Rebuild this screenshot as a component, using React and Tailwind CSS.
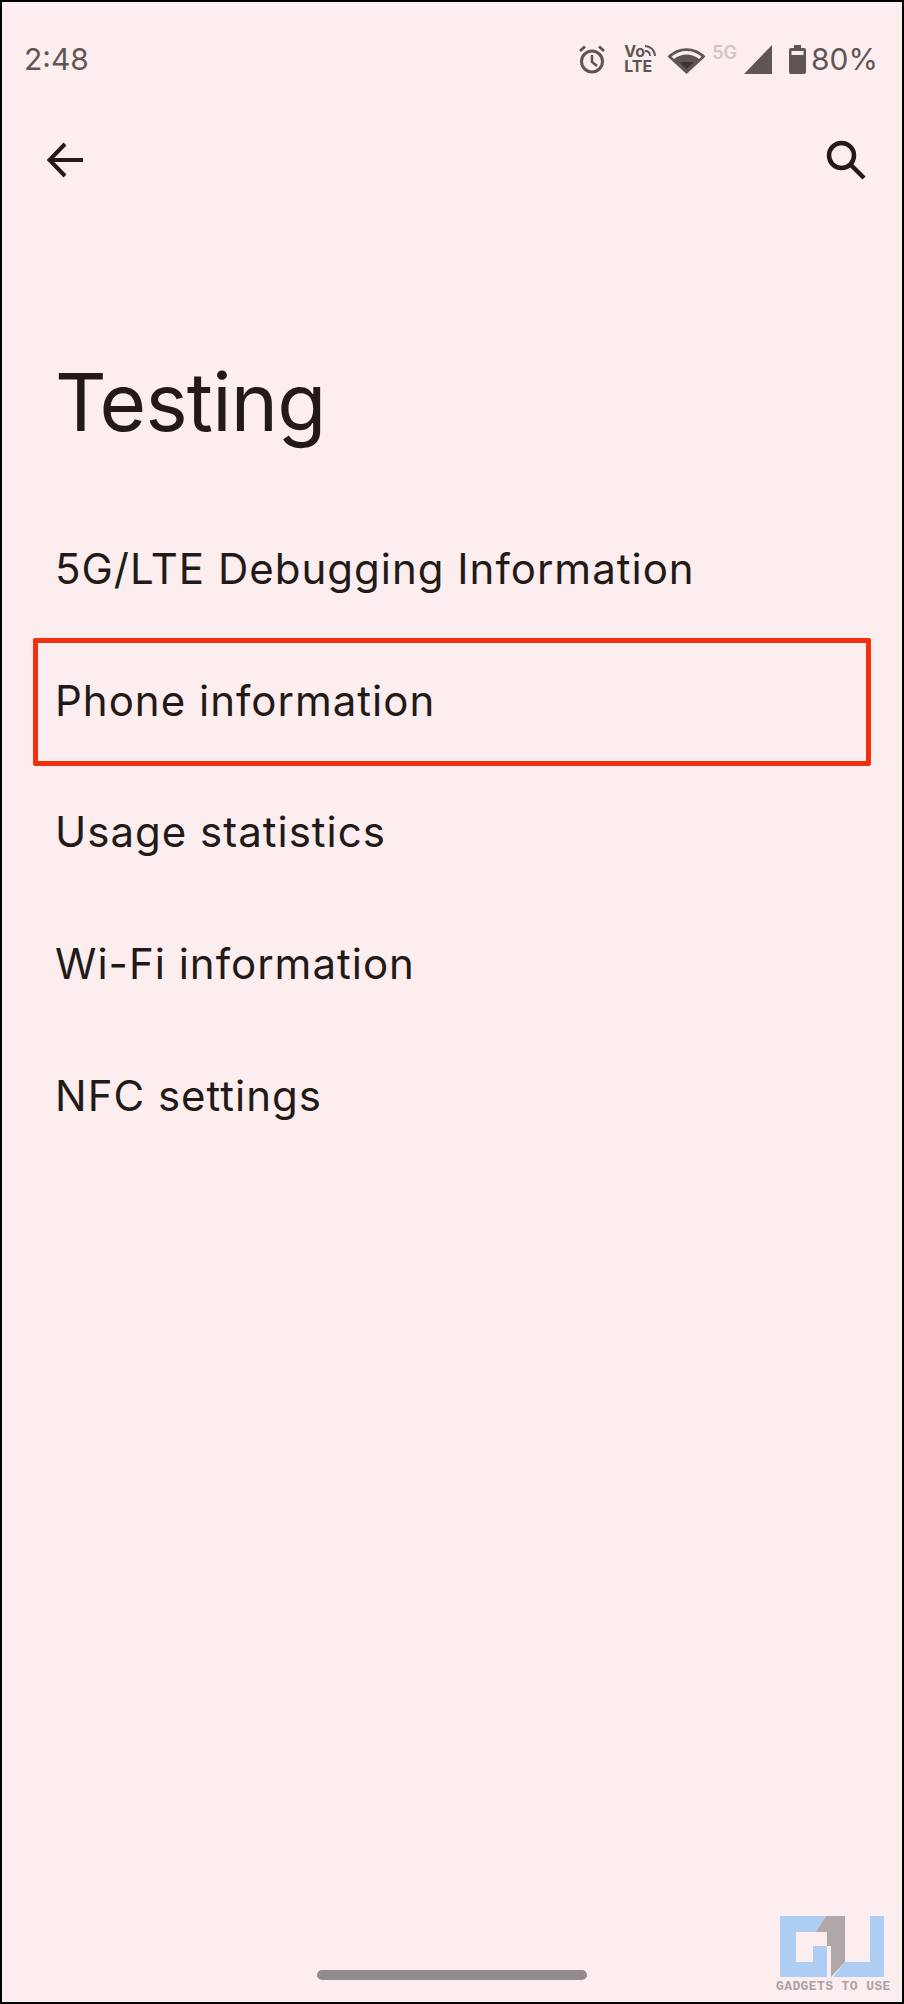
import React from "react";

const items = ["5G/LTE Debugging Information", "Phone information", "Usage statistics", "Wi-Fi information", "NFC settings"];

const AlarmIcon = () => (
  <svg width="26" height="29" viewBox="0 0 26 29" fill="none" stroke="#5f5654" strokeWidth="3">
    <circle cx="13" cy="16.5" r="10.5" />
    <path d="M13 10v7l5 4" strokeWidth="2.6" />
    <path d="M1 6l5-4.5M25 6l-5-4.5" strokeWidth="3" />
  </svg>
);

const VoLteIcon = () => (
  <div className="relative w-[32px] text-[#5f5654] text-[16px] leading-[15px] font-bold">
    <div>Vo</div>
    <div>LTE</div>
    <svg width="12" height="12" viewBox="0 0 12 12" fill="none" stroke="#5f5654" strokeWidth="1.8" className="absolute right-0 top-[1px]">
      <path d="M1 1C6 1 11 5 11 11M1 6C4 6 6 8 6 11" />
    </svg>
  </div>
);

const WifiIcon = () => (
  <svg width="39" height="29" viewBox="0 0 39 29">
    <path d="M0.5 11.5C11 0.5 28 0.5 38.5 11.5L19.5 29Z" fill="#5f5654" />
    <path d="M4.5 11.5C13 4 26 4 34.5 11.5L32 14C25 8 14 8 7 14Z" fill="#fceeee" />
    <path d="M12 17H27L19.5 24Z" fill="#3d3533" />
  </svg>
);

const SignalIcon = () => (
  <svg width="28" height="29" viewBox="0 0 28 29">
    <path d="M28 0V29H0Z" fill="#5f5654" />
  </svg>
);

const BatteryIcon = () => (
  <svg width="17" height="29" viewBox="0 0 17 29">
    <path d="M5 0h7v3h3a2 2 0 0 1 2 2v22a2 2 0 0 1-2 2H2a2 2 0 0 1-2-2V5a2 2 0 0 1 2-2h3Z" fill="#5f5654" />
    <rect x="2.5" y="6" width="12" height="4" fill="#fceeee" />
  </svg>
);

const Watermark = () => (
  <div className="absolute left-[774px] top-[1914px] w-[116px]">
    <svg width="104" height="61" viewBox="0 0 104 61" className="ml-[4px]">
      <path d="M0 0H46L36 16H16V46H33V30H47V61H0Z" fill="#aecdf2" />
      <path d="M36 16L46 0H65V46L51 61V30H47V16Z" fill="#b0a7a8" />
      <path d="M65 46H90V0H104V61H53Z" fill="#aecdf2" />
    </svg>
    <div className="mt-[5px] text-[13px] leading-[10px] font-bold tracking-[0.4px] text-[#aaa2a3] whitespace-nowrap font-['Liberation_Mono',monospace]">
      GADGETS TO USE
    </div>
  </div>
);

export default function App() {
  return (
    <div className="relative w-[904px] h-[2004px] flex flex-col bg-[#fceeee] border-2 border-black text-[#231a18] font-['Inter',sans-serif]">
      {/* Status bar */}
      <div className="flex items-center h-[30px] mt-[42px] pl-[22px] pr-[24px] text-[#5f5654]">
        <span className="text-[30px] leading-none">2:48</span>
        <div className="ml-auto flex items-center">
          <AlarmIcon />
          <div className="ml-[19px]"><VoLteIcon /></div>
          <div className="ml-[11px]"><WifiIcon /></div>
          <span className="ml-[6px] mb-[12px] text-[18px] leading-none font-semibold text-[#cfc6c5]">5G</span>
          <div className="ml-[7px]"><SignalIcon /></div>
          <div className="ml-[17px]"><BatteryIcon /></div>
          <span className="ml-[5px] text-[30px] leading-none">80%</span>
        </div>
      </div>

      {/* App bar */}
      <div className="flex items-center justify-between h-[40px] mt-[66px] pl-[45px] pr-[36px]">
        <svg width="36" height="36" viewBox="0 0 36 36" fill="none" stroke="#231a18" strokeWidth="4">
          <path d="M36 18H3M18 2L2.5 18L18 34" />
        </svg>
        <svg width="40" height="40" viewBox="0 0 40 40" fill="none" stroke="#231a18" strokeWidth="4.5">
          <circle cx="15.5" cy="15.5" r="12.5" />
          <path d="M24.5 24.5L38 38" />
        </svg>
      </div>

      {/* Title */}
      <h1 className="mt-[172px] pl-[53px] text-[80px] leading-[100px] font-normal tracking-[-0.8px]">Testing</h1>

      {/* Rows */}
      <div className="mt-[51px] flex flex-col">
        {items.map((item) => (
          <div key={item} className="relative h-[131.7px] flex items-center pl-[53px] text-[42px] leading-none tracking-[1px] whitespace-nowrap">
            {item}
            {item === "Phone information" && (
              <div className="absolute left-[31px] top-[3px] w-[838px] h-[128px] border-[5px] border-[#f0300e] rounded-[2px]" />
            )}
          </div>
        ))}
      </div>

      {/* Home indicator */}
      <div className="mt-auto mb-[22px] ml-[315px] w-[270px] h-[10px] rounded-full bg-[#938a8b]" />
      <Watermark />
    </div>
  );
}
